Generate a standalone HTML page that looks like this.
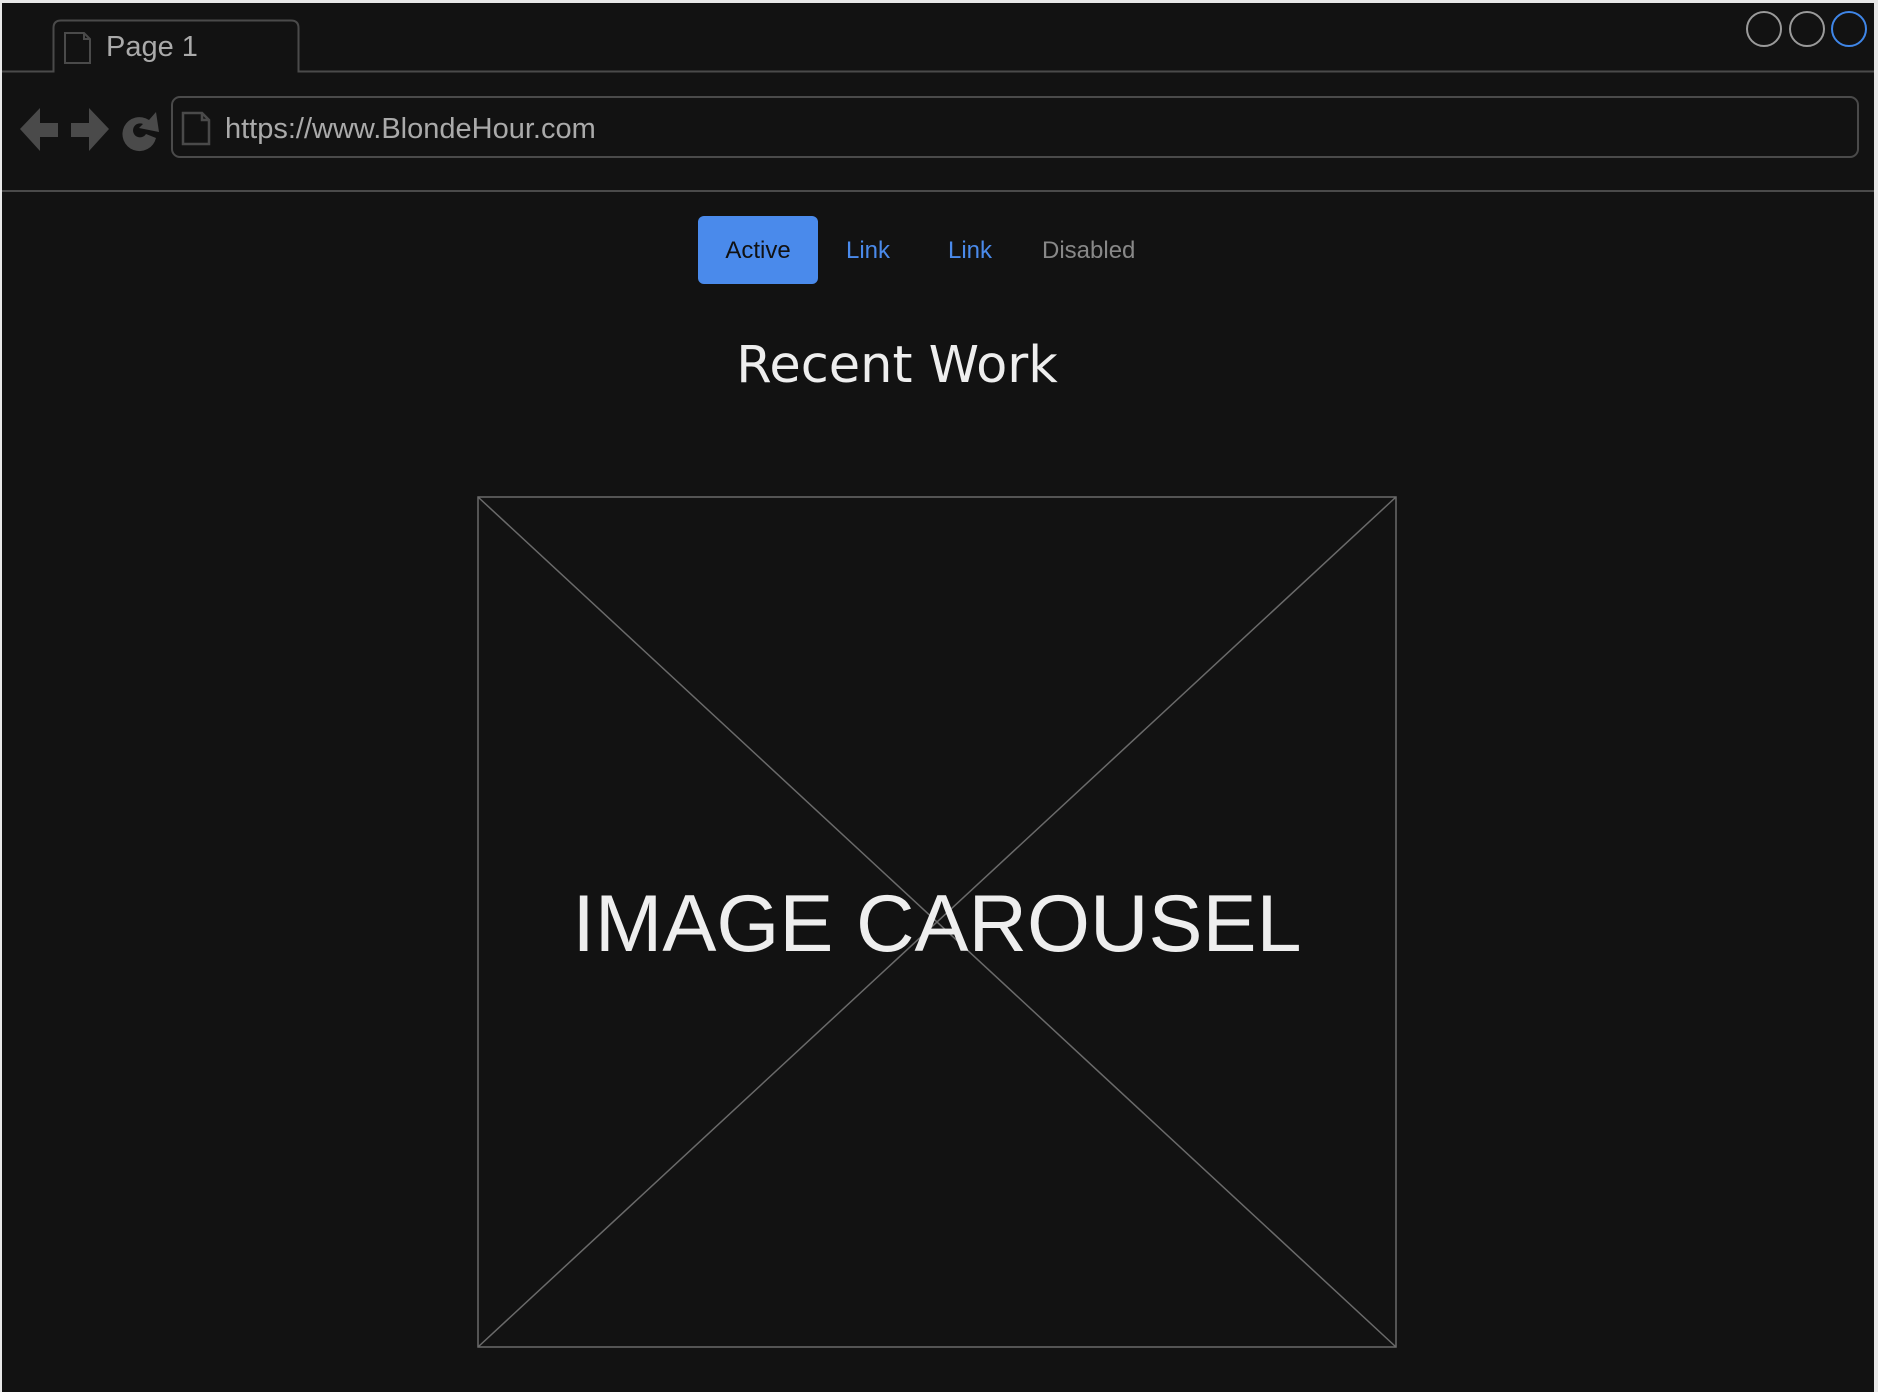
<!DOCTYPE html>
<html><head><meta charset="utf-8"><style>
html,body{margin:0;padding:0;width:1878px;height:1392px;overflow:hidden;background:#e8e8e8;}
.win{position:absolute;left:2px;top:3px;width:1872px;height:1389px;background:#121212;}
.abs{position:absolute;}
.t{font-family:"Liberation Sans",Arial,sans-serif;white-space:nowrap;}
</style></head><body>
<div class="win"></div>
<svg class="abs" style="left:0;top:0" width="1878" height="1392" viewBox="0 0 1878 1392">
  <path d="M2 71.5 H53.5 V28 Q53.5 20.5 61 20.5 H291 Q298.5 20.5 298.5 28 V71.5 H1874" fill="none" stroke="#4a4a4a" stroke-width="2"/>
  <path d="M65 33 H84 L90 39 V63 H65 Z M84 33 V39 H90" fill="none" stroke="#4a4a4a" stroke-width="2"/>
  <circle cx="1764" cy="29" r="17" fill="none" stroke="#9a9a9a" stroke-width="2"/>
  <circle cx="1807" cy="29" r="17" fill="none" stroke="#9a9a9a" stroke-width="2"/>
  <circle cx="1849" cy="29" r="17" fill="none" stroke="#3f86e8" stroke-width="2"/>
  <rect x="172" y="97" width="1686" height="60" rx="8" fill="none" stroke="#4a4a4a" stroke-width="2"/>
  <path d="M183 113 H202 L209 120 V144 H183 Z M202 113 V120 H209" fill="none" stroke="#4a4a4a" stroke-width="2.5"/>
  <line x1="2" y1="191" x2="1874" y2="191" stroke="#4a4a4a" stroke-width="2"/>
  <path d="M20 129 L40 108 V123 H58 V137 H40 V151 Z" fill="#4a4a4a"/>
  <path d="M109 129 L89 108 V123 H71 V137 H89 V151 Z" fill="#4a4a4a"/>
  <path d="M149 120 A17 17 0 1 0 156 138 L146 134 A7 7 0 1 1 143 124 L139 128 L159 132 L156 112 Z" fill="#4a4a4a"/>
  <rect x="478" y="497" width="918" height="850" fill="none" stroke="#6a6a6a" stroke-width="1.5"/>
  <line x1="478" y1="497" x2="1396" y2="1347" stroke="#6a6a6a" stroke-width="1.5"/>
  <line x1="1396" y1="497" x2="478" y2="1347" stroke="#6a6a6a" stroke-width="1.5"/>
</svg>
<div class="abs t" style="left:106px;top:30px;font-size:29px;color:#aaaaaa;line-height:34px;">Page 1</div>
<div class="abs t" style="left:225px;top:112px;font-size:29px;color:#aaaaaa;line-height:34px;">https://www.BlondeHour.com</div>
<div class="abs" style="left:698px;top:216px;width:120px;height:68px;background:#4a8aeb;border-radius:6px;"></div>
<div class="abs t" style="left:698px;top:237px;width:120px;text-align:center;font-size:24px;line-height:28px;color:#111;">Active</div>
<div class="abs t" style="left:846px;top:237px;font-size:24px;line-height:28px;color:#4a8aeb;">Link</div>
<div class="abs t" style="left:948px;top:237px;font-size:24px;line-height:28px;color:#4a8aeb;">Link</div>
<div class="abs t" style="left:1042px;top:237px;font-size:24px;line-height:28px;color:#888;">Disabled</div>
<div class="abs" style="left:600px;top:334px;width:594px;text-align:center;font-family:'DejaVu Sans',sans-serif;font-size:51px;line-height:64px;color:#eeeeee;">Recent Work</div>
<div class="abs t" style="left:478px;top:874px;width:918px;text-align:center;font-size:81px;line-height:100px;color:#eeeeee;">IMAGE CAROUSEL</div>
</body></html>
